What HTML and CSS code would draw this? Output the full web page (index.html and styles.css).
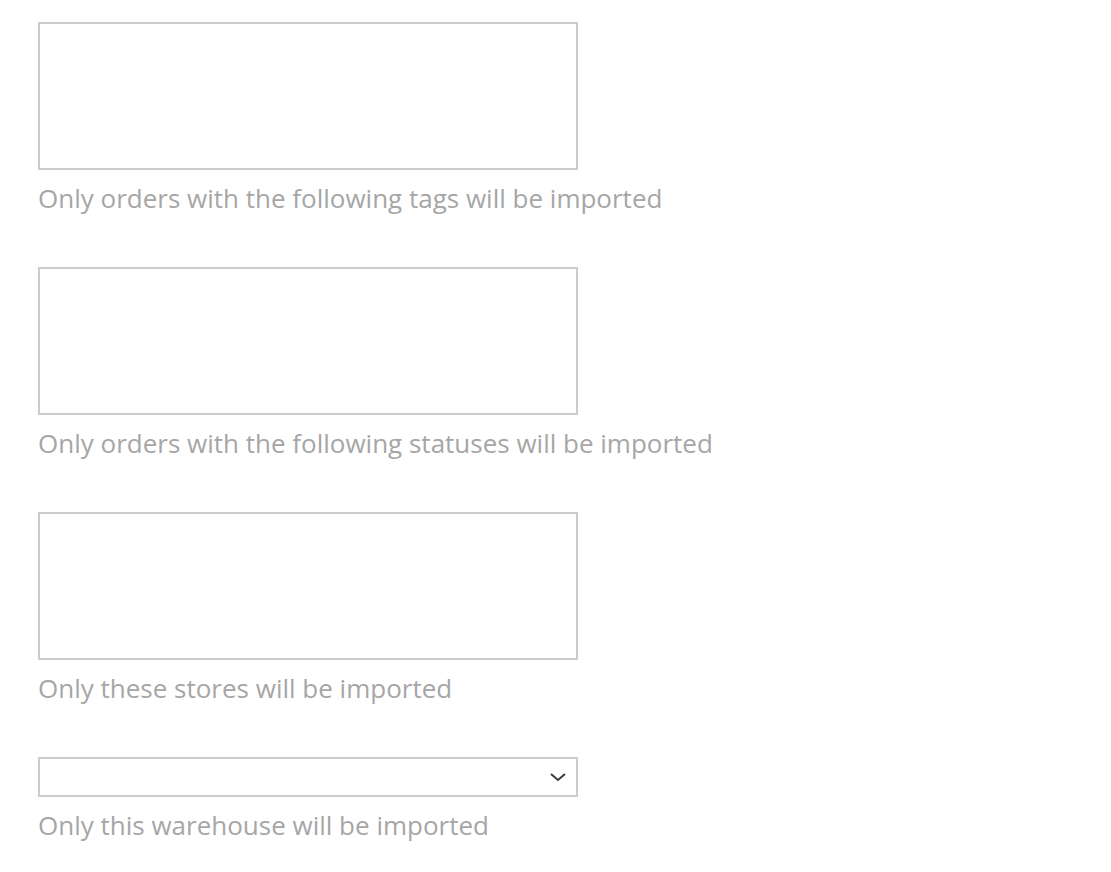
FILE: index.html
```html
<!DOCTYPE html>
<html lang="en">

<head>
    <meta charset="UTF-8">
    <meta name="viewport" content="width=device-width, initial-scale=1.0">
    <title>Import filters</title>
    <link rel="stylesheet" href="styles.css">
</head>

<body>
    <div class="filtros">
        <div class="campo">
            <textarea class="caixa" id="tags"></textarea>
            <p class="ajuda">Only orders with the following tags will be imported</p>
        </div>
        <div class="campo">
            <textarea class="caixa" id="statuses"></textarea>
            <p class="ajuda">Only orders with the following statuses will be imported</p>
        </div>
        <div class="campo">
            <textarea class="caixa" id="stores"></textarea>
            <p class="ajuda">Only these stores will be imported</p>
        </div>
        <div class="campo">
            <div class="selecao">
                <select id="warehouse">
                    <option value=""></option>
                </select>
                <svg class="seta" width="18" height="10" viewBox="0 0 18 10">
                    <path d="M2 2 L9 8 L16 2" fill="none" stroke="#3a3a3a" stroke-width="2" />
                </svg>
            </div>
            <p class="ajuda">Only this warehouse will be imported</p>
        </div>
    </div>
</body>

</html>
```

FILE: styles.css
```css
body {
    font-family: 'Open Sans', sans-serif;
    margin: 0;
    padding: 22px 38px;
    background-color: #ffffff;
}

.campo {
    margin-bottom: 51px;
}

.campo:last-child {
    margin-bottom: 0;
}

.caixa {
    display: block;
    width: 540px;
    height: 148px;
    box-sizing: border-box;
    margin: 0;
    border: 2px solid #cccccc;
    border-radius: 0;
    resize: none;
    background-color: #ffffff;
}

.selecao {
    position: relative;
    width: 540px;
}

.selecao select {
    display: block;
    width: 540px;
    height: 40px;
    box-sizing: border-box;
    margin: 0;
    border: 2px solid #cccccc;
    border-radius: 0;
    background-color: #ffffff;
    appearance: none;
    -webkit-appearance: none;
}

.seta {
    position: absolute;
    right: 11px;
    top: 15px;
    pointer-events: none;
}

.ajuda {
    margin: 10px 0 0 0;
    font-size: 26px;
    line-height: 36px;
    color: #a6a6a6;
}
```
